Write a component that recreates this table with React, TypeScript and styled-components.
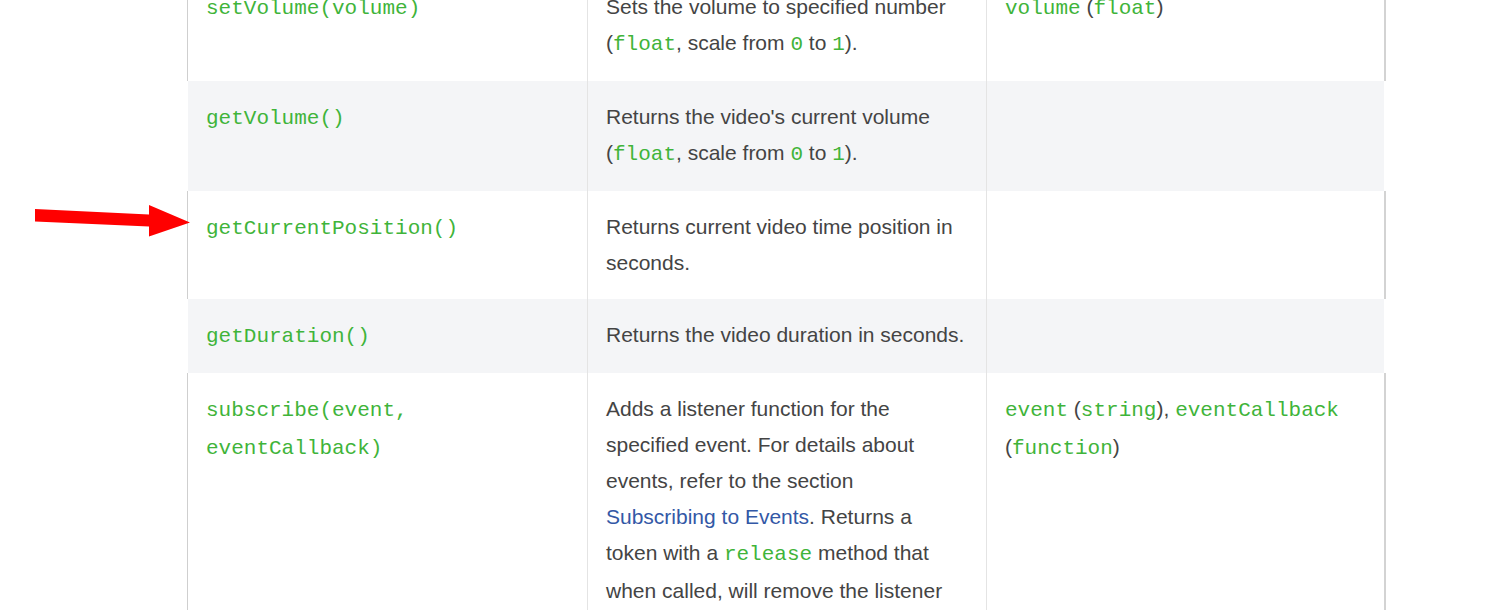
import React from "react";
import styled, { createGlobalStyle } from "styled-components";

const GlobalStyle = createGlobalStyle`
  html, body {
    margin: 0;
    padding: 0;
    background: #ffffff;
  }
  body {
    font-family: "Liberation Sans", Arial, sans-serif;
    font-size: 21px;
    line-height: 36px;
    color: #444444;
    overflow: hidden;
  }
`;

const Page = styled.div`
  position: relative;
  padding-left: 187px;
  margin-top: -29px;
`;

const Table = styled.table`
  width: 1199px;
  table-layout: fixed;
  border-collapse: separate;
  border-spacing: 0;
`;

const Row = styled.tr<{ $striped?: boolean }>`
  background: ${(p) => (p.$striped ? "#f4f5f7" : "#ffffff")};

  & > td:first-child {
    border-left: 1px solid ${(p) => (p.$striped ? "#ffffff" : "#cfcfcf")};
  }
  & > td:last-child {
    border-right: 2px solid ${(p) => (p.$striped ? "#ffffff" : "#d3d3d3")};
  }
`;

const Cell = styled.td`
  vertical-align: top;
  padding: 18px 18px;
  border-right: 1px solid #e4e4e4;
  word-wrap: break-word;
`;

const Code = styled.code`
  font-family: "Liberation Mono", "Courier New", monospace;
  font-size: 21px;
  color: #3fb43a;
`;

const Link = styled.a`
  color: #3358a6;
  text-decoration: none;
`;

const Arrow = styled.svg`
  position: absolute;
  left: 0;
  top: 29px;
  overflow: visible;
`;

type RowData = {
  name: React.ReactNode;
  desc: React.ReactNode;
  params?: React.ReactNode;
};

const rows: RowData[] = [
  {
    name: <Code>setVolume(volume)</Code>,
    desc: (
      <>
        Sets the volume to specified number (<Code>float</Code>, scale from{" "}
        <Code>0</Code> to <Code>1</Code>).
      </>
    ),
    params: (
      <>
        <Code>volume</Code> (<Code>float</Code>)
      </>
    ),
  },
  {
    name: <Code>getVolume()</Code>,
    desc: (
      <>
        Returns the video's current volume (<Code>float</Code>, scale from{" "}
        <Code>0</Code> to <Code>1</Code>).
      </>
    ),
  },
  {
    name: <Code>getCurrentPosition()</Code>,
    desc: <>Returns current video time position in seconds.</>,
  },
  {
    name: <Code>getDuration()</Code>,
    desc: <>Returns the video duration in seconds.</>,
  },
  {
    name: <Code>subscribe(event, eventCallback)</Code>,
    desc: (
      <>
        Adds a listener function for the specified event. For details about
        events, refer to the section{" "}
        <Link href="#subscribing-to-events">Subscribing to Events</Link>.
        Returns a token with a <Code>release</Code> method that when called,
        will remove the listener subscription.
      </>
    ),
    params: (
      <>
        <Code>event</Code> (<Code>string</Code>), <Code>eventCallback</Code> (
        <Code>function</Code>)
      </>
    ),
  },
];

export default function App() {
  return (
    <>
      <GlobalStyle />
      <Page>
        <Arrow width="200" height="260" viewBox="0 0 200 260">
          <polygon
            points="35,209 149,214.5 149,205 190,222.5 149,236.5 149,226.5 35,221.5"
            fill="#ff0000"
          />
        </Arrow>
        <Table>
          <colgroup>
            <col style={{ width: 401 }} />
            <col style={{ width: 399 }} />
            <col style={{ width: 399 }} />
          </colgroup>
          <tbody>
            {rows.map((r, i) => (
              <Row key={i} $striped={i % 2 === 1}>
                <Cell>{r.name}</Cell>
                <Cell>{r.desc}</Cell>
                <Cell>{r.params}</Cell>
              </Row>
            ))}
          </tbody>
        </Table>
      </Page>
    </>
  );
}
